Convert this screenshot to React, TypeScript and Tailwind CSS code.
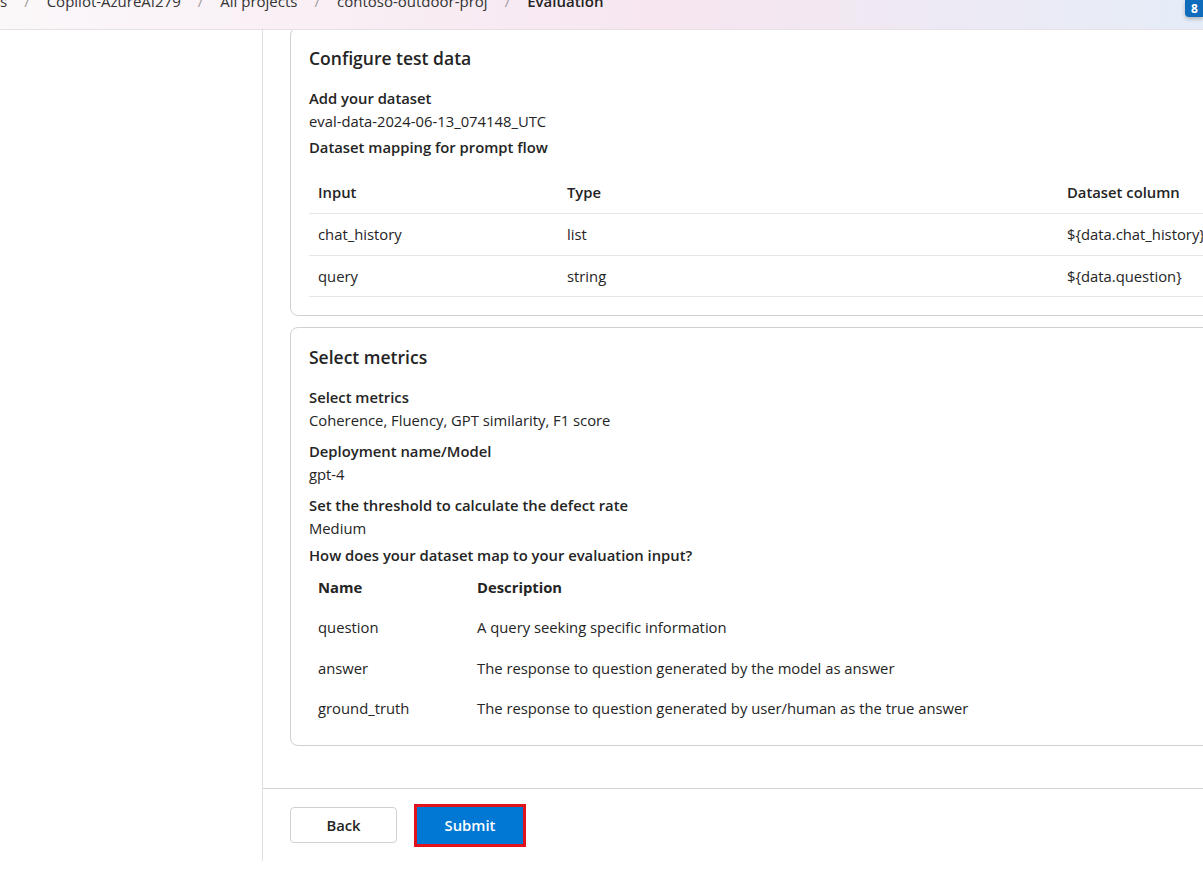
import React from "react";

const datasetRows = [
  { input: "chat_history", type: "list", column: "${data.chat_history}" },
  { input: "query", type: "string", column: "${data.question}" },
];

const metricRows = [
  { name: "question", desc: "A query seeking specific information" },
  { name: "answer", desc: "The response to question generated by the model as answer" },
  { name: "ground_truth", desc: "The response to question generated by user/human as the true answer" },
];

function Field({ label, value }: { label: string; value: string }) {
  return (
    <div className="flex flex-col">
      <div className="font-semibold leading-[23px]">{label}</div>
      <div className="leading-[23px]">{value}</div>
    </div>
  );
}

export default function App() {
  const crumbs = ["s", "Copilot-AzureAI279", "All projects", "contoso-outdoor-proj"];

  return (
    <div className="h-[871px] w-[1203px] overflow-hidden bg-white font-['Open_Sans',sans-serif] text-[14.8px] text-[#242424]">
      {/* top bar */}
      <header className="relative z-10 flex h-[30px] items-start justify-between border-b border-[#e8dfe5] bg-gradient-to-r from-[#fbf8fa] via-[#f7e6f0] via-55% to-[#e5edf8]">
        <nav className="-mt-[9px] flex items-center text-[15px] leading-[20px] text-[#333333]">
          {crumbs.map((c) => (
            <React.Fragment key={c}>
              <span>{c}</span>
              <span className="px-[17px] text-[#9e9e9e]">/</span>
            </React.Fragment>
          ))}
          <span className="font-semibold text-[#242424]">Evaluation</span>
        </nav>
        <div className="flex h-[17px] w-[18px] items-center justify-center rounded-bl-[4px] bg-[#0f6cbd] pl-[1px] text-[12px] font-bold text-white shadow-[0_2px_4px_rgba(0,0,0,0.25)]">
          8
        </div>
      </header>

      <div className="flex">
        <aside className="h-[831px] w-[263px] shrink-0 border-r border-[#e0e0e0]" />

        <main className="flex w-[1100px] shrink-0 flex-col">
          <div className="flex flex-col gap-[11px] pl-[27px]">
            {/* Configure test data */}
            <section className="-mt-[3px] w-[1000px] rounded-[8px] border border-[#d1d1d1] px-[18px] pb-[18px] pt-[18px]">
              <h2 className="text-[17.5px] font-semibold leading-[24px]">Configure test data</h2>
              <div className="mt-[17px] font-semibold leading-[23px]">Add your dataset</div>
              <div className="leading-[23px]">eval-data-2024-06-13_074148_UTC</div>
              <div className="mt-[3px] font-semibold leading-[23px]">Dataset mapping for prompt flow</div>
              <div className="mt-[13px] flex flex-col">
                <div className="flex h-[42px] items-center border-b border-[#e6e6e6] font-semibold">
                  <div className="w-[249px] pl-[9px]">Input</div>
                  <div className="w-[500px] pl-[9px]">Type</div>
                  <div className="pl-[9px]">Dataset column</div>
                </div>
                {datasetRows.map((r) => (
                  <div key={r.input} className="flex h-[41.5px] items-center border-b border-[#e6e6e6]">
                    <div className="w-[249px] pl-[9px]">{r.input}</div>
                    <div className="w-[500px] pl-[9px]">{r.type}</div>
                    <div className="pl-[9px]">{r.column}</div>
                  </div>
                ))}
              </div>
            </section>

            {/* Select metrics */}
            <section className="w-[1000px] rounded-[8px] border border-[#d1d1d1] px-[18px] pb-[16px] pt-[17px]">
              <h2 className="text-[17.5px] font-semibold leading-[24px]">Select metrics</h2>
              <div className="mt-[17px] flex flex-col gap-[8px]">
                <Field label="Select metrics" value="Coherence, Fluency, GPT similarity, F1 score" />
                <Field label="Deployment name/Model" value="gpt-4" />
                <Field label="Set the threshold to calculate the defect rate" value="Medium" />
              </div>
              <div className="mt-[4px] font-semibold leading-[23px]">How does your dataset map to your evaluation input?</div>
              <div className="flex flex-col">
                <div className="flex h-[40px] items-center font-bold">
                  <div className="w-[168px] pl-[9px]">Name</div>
                  <div>Description</div>
                </div>
                {metricRows.map((r) => (
                  <div key={r.name} className="flex h-[40.5px] items-center">
                    <div className="w-[168px] pl-[9px]">{r.name}</div>
                    <div>{r.desc}</div>
                  </div>
                ))}
              </div>
            </section>
          </div>

          {/* footer */}
          <div className="mt-[42px] flex items-center gap-[20px] border-t border-[#d6d6d6] pl-[27px] pt-[18px]">
            <button
              type="button"
              className="h-[36px] w-[107px] rounded-[4px] border border-[#d1d1d1] bg-white font-semibold text-[#242424]"
            >
              Back
            </button>
            <button
              type="button"
              className="h-[37px] w-[106px] bg-[#0078d4] font-semibold text-white outline outline-[3px] outline-[#e3131c]"
            >
              Submit
            </button>
          </div>
        </main>
      </div>
    </div>
  );
}
